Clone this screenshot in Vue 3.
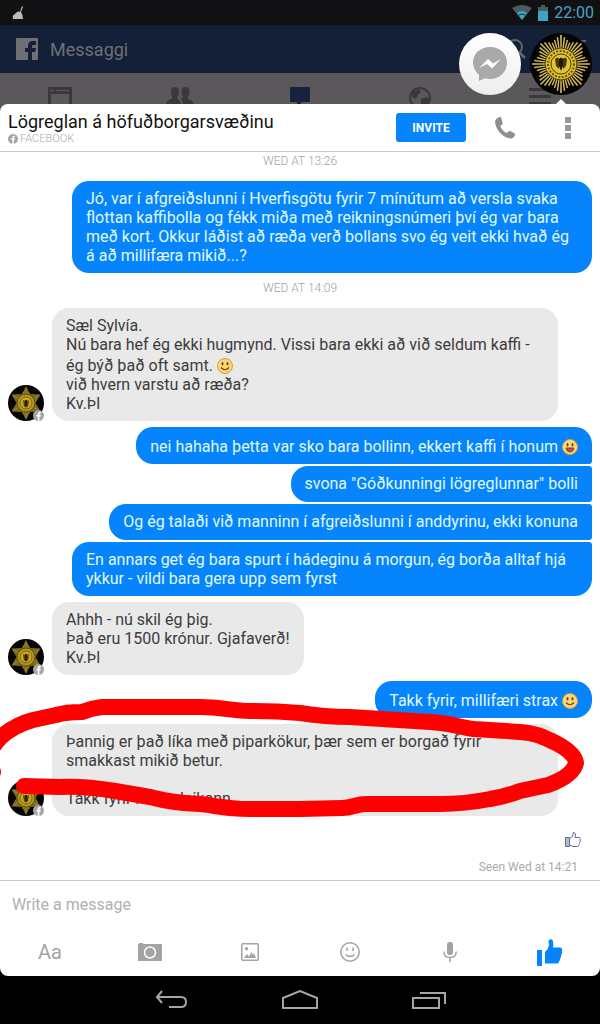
<script setup>
import { ref } from 'vue'

const draft = ref('')

const thread = [
  { type: 'time', text: 'WED AT 13:26' },
  { type: 'out', bubbles: [
    { text: 'Jó, var í afgreiðslunni í Hverfisgötu fyrir 7 mínútum að versla svaka flottan kaffibolla og fékk miða með reikningsnúmeri því ég var bara með kort. Okkur láðist að ræða verð bollans svo ég veit ekki hvað ég á að millifæra mikið...?' }
  ] },
  { type: 'time', text: 'WED AT 14:09' },
  { type: 'in', bubbles: [
    { text: 'Sæl Sylvía.\nNú bara hef ég ekki hugmynd. Vissi bara ekki að við seldum kaffi - ég býð það oft samt. ', emoji: 'smile', rest: '\nvið hvern varstu að ræða?\nKv.Þl' }
  ] },
  { type: 'out', bubbles: [
    { text: 'nei hahaha þetta var sko bara bollinn, ekkert kaffi í honum ', emoji: 'grin' },
    { text: 'svona "Góðkunningi lögreglunnar" bolli' },
    { text: 'Og ég talaði við manninn í afgreiðslunni í anddyrinu, ekki konuna' },
    { text: 'En annars get ég bara spurt í hádeginu á morgun, ég borða alltaf hjá ykkur - vildi bara gera upp sem fyrst' }
  ] },
  { type: 'in', bubbles: [
    { text: 'Ahhh - nú skil ég þig.\nÞað eru 1500 krónur. Gjafaverð!\nKv.Þl' }
  ] },
  { type: 'out', bubbles: [
    { text: 'Takk fyrir, millifæri strax ', emoji: 'smile' }
  ] },
  { type: 'in', marked: true, bubbles: [
    { text: 'Þannig er það líka með piparkökur, þær sem er borgað fyrir smakkast mikið betur.\n\nTakk fyrir heiðarleikann.' }
  ] }
]

// rays of the police star, longer towards the eight points
const rays = Array.from({ length: 48 }, (_, i) => {
  const a = (i / 48) * Math.PI * 2
  const step = Math.min(i % 6, 6 - (i % 6))
  const len = 29 - step * 2
  const at = (angle, r) => `${31 + Math.sin(angle) * r},${31 - Math.cos(angle) * r}`
  return `${at(a - 0.045, 15)} ${at(a - 0.03, len)} ${at(a + 0.03, len)} ${at(a + 0.045, 15)}`
})
</script>

<template>
  <div class="screen">
    <svg class="defs" aria-hidden="true">
      <symbol id="badge-star" viewBox="0 0 62 62">
        <circle cx="31" cy="31" r="31" fill="#050504" />
        <polygon v-for="(r, i) in rays" :key="i" :points="r" fill="#d2b85e" />
        <circle cx="31" cy="31" r="16" fill="#d9bd2f" stroke="#4b3d10" stroke-width="1" />
        <circle cx="31" cy="31" r="13" fill="none" stroke="#6b5714" stroke-width="2" stroke-dasharray="2 1.5" />
        <circle cx="31" cy="31" r="10" fill="#e3c534" stroke="#4b3d10" stroke-width="1" />
        <path d="M25 26q3-3 4 0v10l-3-3zM37 26q-3-3-4 0v10l3-3z" fill="#4a3b0c" />
        <path d="M29 26q2-3 4 0v7l-2 5-2-5z" fill="#211a07" />
      </symbol>
      <symbol id="badge-small" viewBox="0 0 36 36">
        <circle cx="18" cy="18" r="18" fill="#050504" />
        <path d="M18 1l4 8 10.500 0.500-5 8.500 5 8.500L22 27l-4 8-4-8-10.500-.5 5-8.500-5-8.500L14 9z" fill="#7c6a22" />
        <path d="M18 3v30M5 10.500l26 15M31 10.500l-26 15M18 18l-3-11M18 18l3-11M18 18l-3 11M18 18l3 11" stroke="#a8923c" stroke-width=".7" />
        <circle cx="18" cy="18" r="9" fill="#b1961c" stroke="#5d4d0e" stroke-width="1" />
        <circle cx="18" cy="18" r="6" fill="#c5a824" stroke="#6b5912" stroke-width=".8" />
        <path d="M15 15l2 1v5l-1 1zM21 15l-2 1v5l1 1z" fill="#54430c" />
        <path d="M17 15h2v6l-1 2-1-2z" fill="#2a2108" />
      </symbol>
      <symbol id="fb-dot" viewBox="0 0 12 12">
        <circle cx="6" cy="6" r="6" fill="#a5a5a5" />
        <path d="M5.200 12V7.200H3.800V5.400h1.400V4.200C5.200 2.800 6 2 7.300 2h1.300v1.700h-.9c-.6 0-.7.3-.7.800v.9h1.500l-.2 1.800H7V12z" fill="#fff" />
      </symbol>
    </svg>

    <div class="status-bar">
      <svg class="status-note" viewBox="0 0 12 14">
        <path d="M1 13q-1-4 2-5l2-2q2-1 3 0l2-6 1 1-2 5q2 3 2 7z" fill="#bbb" />
      </svg>
      <div class="status-right">
        <svg width="20" height="15" viewBox="0 0 20 15">
          <path d="M0 3Q10-3 20 3L10 15z" fill="#4d5a60" />
          <path d="M5 8q5-4 10 0l-5 7z" fill="#3ba4c9" />
          <path d="M7 10q3-2 6 0" fill="none" stroke="#17272e" stroke-width="1" />
        </svg>
        <svg width="10" height="16" viewBox="0 0 10 16">
          <path d="M3 0h4v2h3v4H0V2h3z" fill="#4d5a60" />
          <path d="M0 6h10v10H0z" fill="#3ba4c9" />
        </svg>
        <span>22:00</span>
      </div>
    </div>

    <header class="app-bar">
      <svg width="22" height="22" viewBox="0 0 22 22">
        <rect width="22" height="22" rx="1" fill="#6d7077" />
        <path d="M12 22v-8H9v-4h3V8c0-3.500 2-5 5-5h3v4h-2c-1.500 0-2 .5-2 2v1h4l-.6 4H16v8z" fill="#141f38" />
      </svg>
      <h1>Messaggi</h1>
      <svg class="search" width="22" height="22" viewBox="0 0 22 22" fill="none" stroke="#5d6372" stroke-width="2">
        <circle cx="11" cy="9" r="7" />
        <path d="M15 14l6 6" stroke-width="3" />
      </svg>
      <svg width="10" height="22" viewBox="0 0 10 22">
        <path d="M0 2h10v2H0z" fill="#5d6372" />
      </svg>
    </header>

    <nav class="tabs">
      <button aria-label="Feed">
        <svg width="24" height="24" viewBox="0 0 24 24">
          <path d="M0 0h24v24H0zM3 7v17h18V7zM2 3v1h4V3zM8 3v1h13V3z" fill="#3a383c" fill-rule="evenodd" />
        </svg>
      </button>
      <button aria-label="Friends">
        <svg width="28" height="24" viewBox="0 0 28 24" fill="#3a383c">
          <path d="M5 4q0-4 4-4t4 4q0 4-1.500 6v2q3 1 3.500 6H0q0-5 6-6.500V10Q5 8 5 4z" />
          <path d="M15.500 4q0-4 4-4t4 4q0 4-1.500 6v2q5 1 6 6H17q0-4-3-6.500l3-.5v-1q-1.500-2-1.500-6z" />
        </svg>
      </button>
      <button aria-label="Messages">
        <svg width="20" height="24" viewBox="0 0 20 24">
          <path d="M0 0h20v15h-8l-5 5v-5H0z" fill="#16223f" />
        </svg>
      </button>
      <button aria-label="Notifications">
        <svg width="22" height="24" viewBox="0 0 22 24">
          <circle cx="11" cy="11" r="10" fill="none" stroke="#3a383c" stroke-width="2" />
          <path d="M3 5l7-3 2 3-3 3-2 4-4-2zM12 12l6-2 3 4-6 7-3-4z" fill="#3a383c" />
        </svg>
      </button>
      <button aria-label="More">
        <svg width="24" height="24" viewBox="0 0 24 24">
          <path d="M1 1h22v3H1zM1 8h22v3H1zM1 15h22v3H1z" fill="#3a383c" />
        </svg>
      </button>
    </nav>

    <div class="chat-heads">
      <div class="head messenger">
        <svg width="36" height="36" viewBox="0 0 36 36">
          <path d="M18 1C8 1 1 8 1 16.500c0 5 2.300 9.200 6 12.200V35l6-2.800c1.600.5 3.300.8 5 .8 10 0 17-7.500 17-16.500S28 1 18 1z" fill="#a9a9a9" />
          <path d="M7 22l9-9 5 4.500 8-4.500-9 9.500-5-4.500z" fill="#fff" />
        </svg>
      </div>
      <div class="head active">
        <svg width="62" height="62"><use href="#badge-star" /></svg>
      </div>
    </div>

    <main class="panel">
      <div class="chat-header">
        <div class="contact">
          <h2>Lögreglan á höfuðborgarsvæðinu</h2>
          <p><svg width="10" height="10"><use href="#fb-dot" /></svg>FACEBOOK</p>
        </div>
        <button class="invite">INVITE</button>
        <button class="call" aria-label="Call">
          <svg width="22" height="22" viewBox="0 0 22 22">
            <path d="M5.500 0C3 1 1 2.500 1 5c1 8 7.500 15.500 15.500 16.500 2.500 0 4-2 4.500-3.500.2-.8 0-1.300-.7-1.700l-4-2.200c-.8-.4-1.300-.2-1.800.3l-1.700 1.700C9.500 14.500 7.500 12 6.300 9l1.900-1.500c.5-.5.6-1 .4-1.700L7.300 1C7 .1 6.300-.3 5.500 0z" fill="#8f8f8f" />
          </svg>
        </button>
        <button class="menu" aria-label="Menu">
          <svg width="6" height="22" viewBox="0 0 6 22" fill="#999">
            <path d="M0 0h6v6H0zM0 8h6v6H0zM0 16h6v6H0z" />
          </svg>
        </button>
      </div>

      <div class="thread">
        <template v-for="(item, i) in thread" :key="i">
          <p v-if="item.type === 'time'" class="time">{{ item.text }}</p>
          <div v-else class="group" :class="item.type">
            <div v-if="item.type === 'in'" class="avatar">
              <svg width="36" height="36"><use href="#badge-small" /></svg>
              <svg class="avatar-badge" width="11" height="11"><use href="#fb-dot" /></svg>
            </div>
            <div class="bubbles">
              <div v-for="(b, j) in item.bubbles" :key="j" class="bubble">
                <p>{{ b.text }}<svg v-if="b.emoji" class="emoji" viewBox="0 0 16 16">
                  <circle cx="8" cy="8" r="7.500" fill="#fbd778" stroke="#dc9d37" />
                  <ellipse cx="5.500" cy="5.800" rx="1" ry="1.700" fill="#6a4317" />
                  <ellipse cx="10.500" cy="5.800" rx="1" ry="1.700" fill="#6a4317" />
                  <path v-if="b.emoji === 'smile'" d="M4 9.500q4 4.500 8 0" fill="none" stroke="#6a4317" stroke-width="1.200" />
                  <path v-else d="M4 9h8q-.5 4-4 4t-4-4z" fill="#b5544a" stroke="#8a4a1c" />
                </svg>{{ b.rest }}</p>
              </div>
            </div>
            <svg v-if="item.marked" class="scribble" viewBox="0 0 600 130" preserveAspectRatio="none">
              <path d="M-7 72C-16 60-8 46 0 38Q14 25 33 20L56 15Q66 12 82 12Q92 8 102 7H200C222 7 232 11 250 11Q276 11 300 13Q325 17 350 17L430 22C450 23 458 27 474 29L520 32C538 33 545 38 556 43Q575 53 576 63Q573 76 548 85L520 91Q504 97 490 99Q465 104 440 104H366C356 104 352 108 342 108L300 109H250C225 109 213 105 200 104Q172 103 150 97L115 91Q85 86 60 87L24 86" />
            </svg>
          </div>
        </template>

        <div class="like-row">
          <svg width="16" height="15" viewBox="0 0 16 15" stroke="#5d6d90" stroke-width="1">
            <path d="M.5 5.500h4v9h-4z" fill="#b5bfd3" />
            <path d="M4.500 6.500q3-1 3.500-4l.3-2q2.200 0 2.200 2.500L10 5.500h4.500q1.500 1 .5 2.500.8 1.200-.4 2.500.5 1.200-.6 2 .2 1.500-1.500 2H8l-3.500-1.500z" fill="#fff" />
          </svg>
        </div>
        <p class="seen">Seen Wed at 14:21</p>
      </div>

      <form class="composer" @submit.prevent>
        <input v-model="draft" type="text" placeholder="Write a message" aria-label="Write a message" />
        <div class="tools">
          <button type="button" class="text-tool">Aa</button>
          <button type="button" aria-label="Camera">
            <svg width="24" height="18" viewBox="0 0 24 18">
              <path d="M1 0h4v1h19v17H0V1h1z" fill="#a3a3a3" />
              <circle cx="12" cy="9.500" r="5.500" fill="#a3a3a3" stroke="#fff" stroke-width="1.500" />
            </svg>
          </button>
          <button type="button" aria-label="Picture">
            <svg width="18" height="18" viewBox="0 0 18 18">
              <rect x=".75" y=".75" width="16.500" height="16.500" rx="1" fill="none" stroke="#a3a3a3" stroke-width="1.500" />
              <circle cx="5.500" cy="5.800" r="1.700" fill="#a3a3a3" />
              <path d="M3 15l3-4 2 2.500L10.500 9l1.500 3 1-2 2 5z" fill="#a3a3a3" />
            </svg>
          </button>
          <button type="button" aria-label="Stickers">
            <svg width="20" height="20" viewBox="0 0 20 20" fill="none" stroke="#a3a3a3" stroke-width="1.500">
              <circle cx="10" cy="10" r="9.200" />
              <path d="M7 5.500v3.500M13 5.500v3.500M5.500 12.500q4.500 4 9 0" />
            </svg>
          </button>
          <button type="button" aria-label="Voice">
            <svg width="14" height="20" viewBox="0 0 14 20">
              <rect x="4" y="0" width="6" height="13" rx="2.500" fill="#a3a3a3" />
              <path d="M.8 9.500q0 6 6.200 6t6.200-6M7 15.500V20" fill="none" stroke="#a3a3a3" stroke-width="1.500" />
            </svg>
          </button>
          <button type="button" aria-label="Like">
            <svg width="26" height="27" viewBox="0 0 26 27" fill="#0584fb">
              <path d="M0 11h5v16H0z" />
              <path d="M8 13q3.500-3 4-7l-.5-4q1-2.500 3.500-1.500 2 2 1 8h7.500q2.500 1 1.500 4 .3 2-.8 3.500 0 2-1 3.500-.2 2-1.200 3 0 2-2 2H8z" />
            </svg>
          </button>
        </div>
      </form>
    </main>

    <nav class="nav-bar">
      <button aria-label="Back">
        <svg width="34" height="20" viewBox="0 0 34 20">
          <path d="M8 1L3 7l5 6M3 7h24q5 0 5 5t-5 5H15" />
        </svg>
      </button>
      <button aria-label="Home">
        <svg width="36" height="20" viewBox="0 0 36 20">
          <path d="M1 18V8L18 1l17 7v10z" />
        </svg>
      </button>
      <button aria-label="Recent">
        <svg width="34" height="20" viewBox="0 0 34 20">
          <path d="M1 8h26v10H1zM8 3h25v11" />
        </svg>
      </button>
    </nav>
  </div>
</template>

<style>
body {
  margin: 0;
  background: #000;
}
</style>

<style scoped>
.screen {
  position: relative;
  display: flex;
  flex-direction: column;
  min-height: 100vh;
  overflow: hidden;
  background: #000;
  font-family: Roboto, "Liberation Sans", sans-serif;
}

h1, h2, p {
  margin: 0;
  font-weight: 400;
}

svg {
  display: block;
}

button {
  display: flex;
  align-items: center;
  justify-content: center;
  padding: 0;
  border: none;
  background: none;
  font-family: inherit;
}

.defs {
  position: absolute;
  width: 0;
  height: 0;
}

.status-bar {
  display: flex;
  align-items: center;
  justify-content: space-between;
  height: 25px;
  padding: 0 6px 0 12px;
  background: #111113;
}

.status-note {
  width: 12px;
  height: 14px;
}

.status-right {
  display: flex;
  align-items: center;
  gap: 6px;
  color: #4ba3c4;
  font-size: 16px;
}

.app-bar {
  display: flex;
  align-items: center;
  height: 48px;
  padding: 0 14px 0 16px;
  background: #141f38;
}

.app-bar h1 {
  flex: 1;
  margin-left: 12px;
  color: #6d7077;
  font-size: 18px;
}

.search {
  margin-right: 50px;
}

.tabs {
  display: grid;
  grid-template-columns: repeat(5, 1fr);
  height: 41px;
  background: #5b585c;
}

.tabs button {
  align-items: flex-start;
  padding-top: 14px;
}

.chat-heads {
  position: absolute;
  top: 33px;
  right: 8px;
  z-index: 2;
  display: flex;
  gap: 9px;
}

.head {
  position: relative;
  display: flex;
  align-items: center;
  justify-content: center;
  width: 62px;
  height: 62px;
  border-radius: 50%;
}

.messenger {
  background: linear-gradient(#fff, #eee);
}

.active::after {
  content: "";
  position: absolute;
  top: 66px;
  border: 6px solid transparent;
  border-top: none;
  border-bottom-color: #fff;
}

.panel {
  position: relative;
  display: flex;
  flex: 1;
  flex-direction: column;
  margin-top: -10px;
  border-radius: 8px;
  background: #fff;
}

.chat-header {
  display: flex;
  align-items: center;
  height: 47px;
  border-bottom: 1px solid #ccc;
}

.contact {
  flex: 1;
  padding-left: 8px;
}

.contact h2 {
  color: #111;
  font-size: 18px;
  line-height: 22px;
}

.contact p {
  display: flex;
  align-items: center;
  gap: 2px;
  color: #aaa;
  font-size: 11px;
  font-weight: 300;
  line-height: 12px;
}

.invite {
  width: 70px;
  height: 29px;
  border-radius: 3px;
  background: #0584fb;
  color: #fff;
  font-size: 12px;
  font-weight: 700;
}

.call {
  width: 78px;
}

.menu {
  width: 48px;
  margin-right: 8px;
}

.thread {
  flex: 1;
  padding: 0 8px;
}

.time {
  margin: 7px 0 12px;
  color: #a2a2a2;
  font-size: 12px;
  font-weight: 300;
  line-height: 16px;
  text-align: center;
}

.time:first-child {
  margin-top: 1px;
}

.group {
  position: relative;
  display: flex;
  align-items: flex-end;
  gap: 8px;
}

.group + .group {
  margin-top: 6px;
}

.in {
  padding-right: 34px;
}

.out {
  padding-left: 64px;
}

.bubbles {
  display: flex;
  flex-direction: column;
  gap: 2px;
  align-items: flex-start;
}

.out .bubbles {
  flex: 1;
  align-items: flex-end;
}

.bubble {
  box-sizing: border-box;
  min-height: 36px;
  padding: 8px 14px;
  border-radius: 17px;
  background: #e9e9e9;
  color: #3c3c3c;
  font-size: 16px;
  line-height: 19px;
}

.bubble p {
  white-space: pre-wrap;
}

.out .bubble {
  background: #0584fb;
  color: #e0f9ff;
}

.out .bubble:not(:first-child) {
  border-top-right-radius: 3px;
}

.out .bubble:not(:last-child) {
  border-bottom-right-radius: 3px;
}

.emoji {
  display: inline-block;
  width: 16px;
  height: 16px;
  margin-top: 4px;
  vertical-align: -3px;
}

.avatar {
  position: relative;
  flex: none;
}

.avatar-badge {
  position: absolute;
  right: 0;
  bottom: 0;
}

/* hand-drawn marker ring, runs past both edges of the group */
.scribble {
  position: absolute;
  top: -24px;
  left: -8px;
  z-index: 1;
  width: calc(100% + 16px);
  height: 130px;
  overflow: visible;
  pointer-events: none;
}

.scribble path {
  fill: none;
  stroke: #fe0000;
  stroke-width: 16;
  stroke-linecap: round;
  stroke-linejoin: round;
}

.like-row {
  display: flex;
  justify-content: flex-end;
  padding: 16px 11px 12px 0;
}

.seen {
  padding-right: 14px;
  color: #aaa;
  font-size: 12px;
  line-height: 16px;
  text-align: right;
}

.composer {
  border-top: 1px solid #ccc;
}

.composer input {
  box-sizing: border-box;
  width: 100%;
  height: 47px;
  padding: 0 12px;
  border: none;
  outline: none;
  background: none;
  color: #333;
  font-family: inherit;
  font-size: 16px;
}

.composer input::placeholder {
  color: #b0b0b0;
}

.tools {
  display: grid;
  grid-template-columns: repeat(6, 1fr);
  height: 48px;
}

.text-tool {
  color: #a3a3a3;
  font-size: 20px;
}

.nav-bar {
  display: flex;
  align-items: center;
  justify-content: center;
  gap: 94px;
  height: 48px;
}

.nav-bar path {
  fill: none;
  stroke: #a5a5a5;
  stroke-width: 2;
}
</style>
